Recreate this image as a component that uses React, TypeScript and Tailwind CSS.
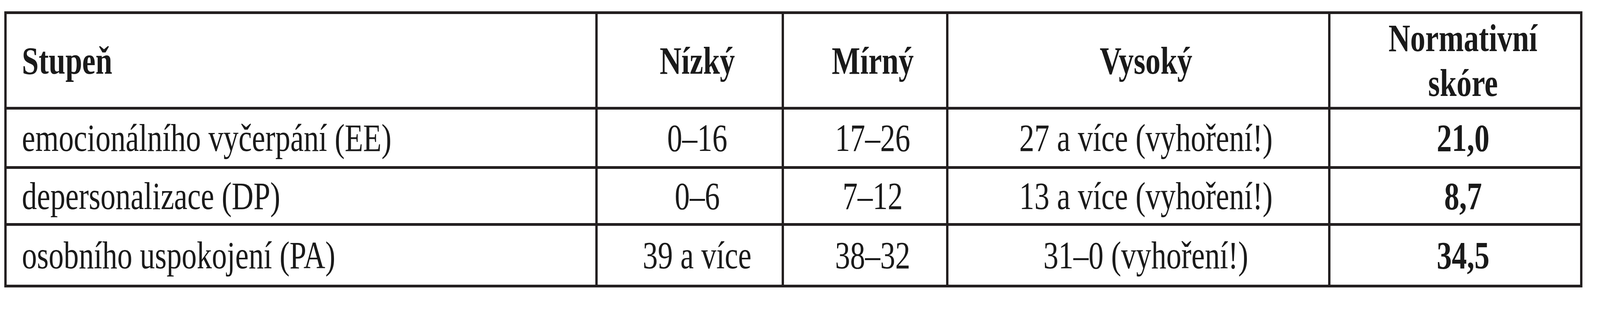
import React from "react";

const head = ["Stupeň", "Nízký", "Mírný", "Vysoký", "Normativní skóre"];
const rows: string[][] = [
  ["emocionálního vyčerpání (EE)", "0–16", "17–26", "27 a více (vyhoření!)", "21,0"],
  ["depersonalizace (DP)", "0–6", "7–12", "13 a více (vyhoření!)", "8,7"],
  ["osobního uspokojení (PA)", "39 a více", "38–32", "31–0 (vyhoření!)", "34,5"],
];
const rowH = ["h-[152px]", "h-[146px]", "h-[151px]"];

function Cell({
  children,
  first,
  last,
  bottom,
  h,
  bold,
}: {
  children: React.ReactNode;
  first: boolean;
  last: boolean;
  bottom: boolean;
  h: string;
  bold: boolean;
}) {
  return (
    <div
      className={
        h +
        " min-w-0 flex items-center border-[#231f20] " +
        (bottom ? "border-b-[7px] " : "") +
        (!last ? "border-r-[6px] " : "") +
        (first ? "pl-[39px] justify-start " : "pl-[43px] pr-[4px] justify-center text-center ") +
        (bold ? "font-bold" : "")
      }
    >
      <span
        className={
          "inline-block whitespace-nowrap scale-x-[0.771] " + (first ? "origin-left" : "origin-center")
        }
      >
        {children}
      </span>
    </div>
  );
}

export default function App() {
  return (
    <div className="w-full h-[800px] bg-white pt-[29px] pl-[0.28%] text-[#1a1a1a] [font-family:'Liberation_Serif','Times_New_Roman',serif] text-[100px] leading-[115px]">
      <div className="w-[98.9%] border-y-[7px] border-x-[6px] border-[#231f20] grid grid-cols-[1968fr_620fr_548fr_1273fr_831fr]">
        {head.map((hd, i) => (
          <Cell key={i} first={i === 0} last={i === 4} bottom h="h-[245px]" bold>
            {i === 4 ? (
              <>
                Normativní
                <br />
                skóre
              </>
            ) : (
              hd
            )}
          </Cell>
        ))}
        {rows.map((r, ri) =>
          r.map((c, ci) => (
            <Cell
              key={ri + "-" + ci}
              first={ci === 0}
              last={ci === 4}
              bottom={ri < 2}
              h={rowH[ri]}
              bold={ci === 4}
            >
              {c}
            </Cell>
          ))
        )}
      </div>
    </div>
  );
}
